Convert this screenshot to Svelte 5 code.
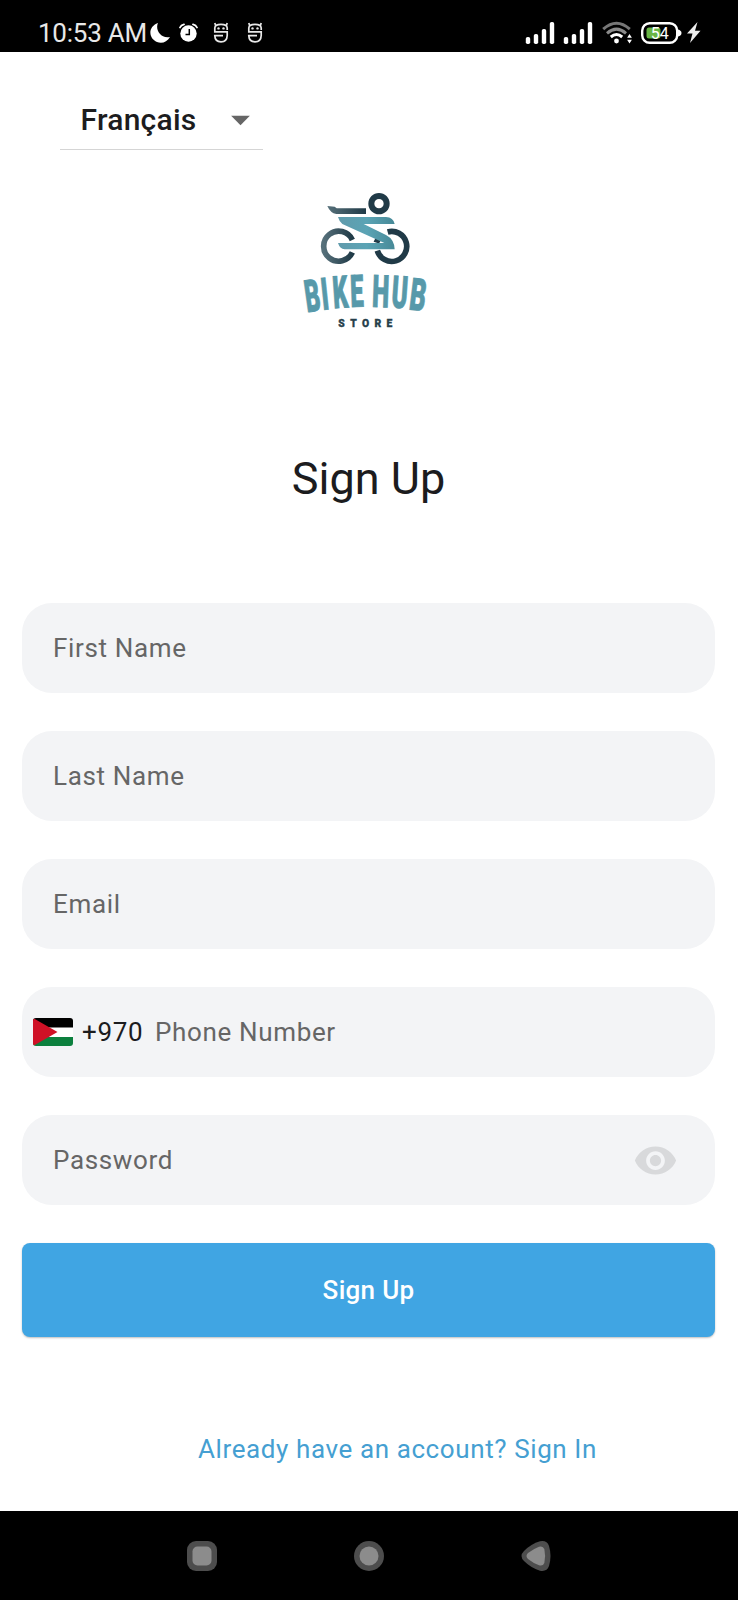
<script>
    let form = { first: '', last: '', email: '', phone: '', password: '' };
    let language = 'Français';
    let showPassword = false;

    const bars = [ 7, 10, 15, 22 ];

    // letters of the arched wordmark: x, baseline, angle, horizontal squeeze
    const wordmark = [
        { c: 'B', x: 81, y: 397, r: -8, s: .52 },
        { c: 'I', x: 128, y: 390, r: -6, s: .54 },
        { c: 'K', x: 161, y: 385, r: -4, s: .53 },
        { c: 'E', x: 212, y: 381, r: -2, s: .53 },
        { c: 'H', x: 275, y: 380, r: 2, s: .54 },
        { c: 'U', x: 332, y: 382, r: 4, s: .54 },
        { c: 'B', x: 385, y: 388, r: 7, s: .56 }
    ];
</script>

<div class="screen">
    <div class="status">
        <span class="time">10:53 AM</span>
        <svg class="moon" width="20" height="20" viewBox="0 0 20 20">
            <path d="M8 0C5 6 10 16 20 14C17 19 12 21 7 19C-1 16-3 4 8 0Z" fill="#fff" />
        </svg>
        <svg class="alarm" width="19" height="19" viewBox="0 0 19 19">
            <circle cx="9.5" cy="10.5" r="8.2" fill="#fff" />
            <path d="M1 4.5Q2 2 5 1.3M18 4.5Q17 2 14 1.3" stroke="#fff" stroke-width="1.8" fill="none" stroke-linecap="round" />
            <path d="M10.3 6v5.4H6.5" stroke="#000" stroke-width="1.5" fill="none" />
        </svg>
        {#each [ 1, 2 ] as n }
            <svg class="figure" width="16" height="21" viewBox="0 0 16 21">
                <g fill="none" stroke="#e8e8e8" stroke-width="1.7">
                    <path d="M14.2 8V6Q14 2.4 8 2.4Q2 2.4 1.8 6V9.8H14.2V13.5Q14 19.8 8 19.8Q2 19.8 1.8 13.6H10" />
                    <path d="M2.8 4L1.8 1M13.2 4L14.2 1" />
                </g>
                <circle cx="5.5" cy="6.4" r="1.2" fill="#e8e8e8" />
                <circle cx="10.5" cy="6.4" r="1.2" fill="#e8e8e8" />
            </svg>
        {/each}

        <div class="status__right">
            {#each [ 1, 2 ] as n }
                <svg class="signal" width="28" height="22" viewBox="0 0 28 22">
                    {#each bars as h, i }
                        <rect x={i * 8 - .2} y={22 - h} width="4.4" height={h} rx="1.8" fill="#fff" />
                    {/each}
                </svg>
            {/each}
            <svg class="wifi" width="31" height="23" viewBox="0 0 31 23">
                <g fill="none" stroke-width="3">
                    <path d="M1.2 8.2Q14.5-3.8 27.8 8.2" stroke="#777" />
                    <path d="M5 12.3Q14.5 4 24 12.3" stroke="#8a8a8a" />
                    <path d="M8.8 16Q14.5 11 20.2 16" stroke="#fff" />
                </g>
                <circle cx="14.5" cy="20" r="2.4" fill="#fff" />
                <path d="M27.5 13l2.4 3.8h-4.8zM27.5 22.6l2.4-3.8h-4.8z" fill="#fff" />
            </svg>
            <svg class="battery" width="41" height="22" viewBox="0 0 41 22">
                <rect x="1.2" y="1.2" width="35" height="19.6" rx="7.5" fill="none" stroke="#fff" stroke-width="2.4" />
                <path d="M37 7.5Q40.5 8.5 40.5 11T37 14.5Z" fill="#fff" />
                <rect x="5.5" y="5.5" width="14" height="11" rx="2.5" fill="#68b545" />
                <text x="18.7" y="16.6" text-anchor="middle">54</text>
            </svg>
            <svg class="bolt" width="14" height="21" viewBox="0 0 14 21">
                <path d="M10.5 0L0 11.5H5.5L3 21L13.5 8.7H8Z" fill="#eee" />
            </svg>
        </div>
    </div>

    <main class="page">
        <button class="language">
            <span>{language}</span>
            <svg width="45" height="45" viewBox="0 0 24 24"><path d="M7 10l5 5 5-5z" fill="#666" /></svg>
        </button>

        <svg class="logo" width="170" height="160" viewBox="0 0 510 480">
            <defs>
                <linearGradient id="dark" x1="0" x2="1">
                    <stop offset="0" stop-color="#56707a" />
                    <stop offset="1" stop-color="#203a47" />
                </linearGradient>
                <linearGradient id="teal" gradientUnits="userSpaceOnUse" x1="170" y1="0" x2="350" y2="0">
                    <stop offset="0" stop-color="#609aab" />
                    <stop offset=".5" stop-color="#5ba4b5" />
                    <stop offset="1" stop-color="#458795" />
                </linearGradient>
            </defs>
            <circle cx="297" cy="71" r="23" fill="none" stroke="#203a47" stroke-width="18" />
            <path d="M142 78L164 80L170 85H258V102H169Q151 99 142 78Z" fill="url(#dark)" />
            <path d="M217 180A45 45 0 1 0 217 217" fill="none" stroke="url(#dark)" stroke-width="17" />
            <path d="M323 156A45 45 0 1 1 292 212M289 188Q292 178 302 170" fill="none" stroke="#203a47" stroke-width="17" />
            <path d="M174 111H318Q340 112 344 132H251L318 165Q343 178 344 208H194Q179 206 174 189H313L187 132Q177 123 174 111Z" fill="url(#teal)" />
            {#each wordmark as l }
                <text class="logo__word" transform="translate({l.x} {l.y}) rotate({l.r}) scale({l.s} 1)">{l.c}</text>
            {/each}
            <text class="logo__store" x="175" y="440" textLength="162">STORE</text>
        </svg>

        <h1>Sign Up</h1>

        <form on:submit|preventDefault>
            <label class="field">
                {#if !form.first }<span class="hint">First Name</span>{/if}
                <input bind:value={form.first} />
            </label>
            <label class="field">
                {#if !form.last }<span class="hint">Last Name</span>{/if}
                <input bind:value={form.last} />
            </label>
            <label class="field">
                {#if !form.email }<span class="hint">Email</span>{/if}
                <input bind:value={form.email} />
            </label>
            <div class="field field--phone">
                <svg class="flag" width="40" height="28" viewBox="0 0 40 28">
                    <path d="M0 0H40V10H0Z" fill="#000" />
                    <path d="M0 9.5H40V19H0Z" fill="#fff" />
                    <path d="M0 19H40V28H0Z" fill="#0c803e" />
                    <path d="M0 0L24.5 14L0 28Z" fill="#cf1126" />
                </svg>
                <span class="code">+970</span>
                <label class="cell">
                    {#if !form.phone }<span class="hint">Phone Number</span>{/if}
                    <input bind:value={form.phone} />
                </label>
            </div>
            <div class="field field--password">
                <label class="cell">
                    {#if !form.password }<span class="hint">Password</span>{/if}
                    <input type={showPassword ? 'text' : 'password'} value={form.password} on:input={ e => form.password = e.target.value } />
                </label>
                <button type="button" class="eye" aria-label="Show password" on:click={ () => showPassword = !showPassword }>
                    <svg width="45" height="45" viewBox="0 0 24 24">
                        <path fill="#d8d9db" d="M12 4.5C7 4.5 2.73 7.61 1 12c1.73 4.39 6 7.5 11 7.5s9.27-3.11 11-7.5c-1.73-4.39-6-7.5-11-7.5zM12 17c-2.76 0-5-2.24-5-5s2.24-5 5-5 5 2.24 5 5-2.24 5-5 5zm0-8c-1.66 0-3 1.34-3 3s1.34 3 3 3 3-1.34 3-3-1.34-3-3-3z" />
                    </svg>
                </button>
            </div>
            <button class="submit">Sign Up</button>
        </form>

        <button class="signin">Already have an account? Sign In</button>
    </main>

    <div class="nav">
        <svg width="30" height="30" viewBox="0 0 30 30">
            <rect width="30" height="30" rx="9" fill="#4d4d4d" />
            <rect x="5.5" y="5.5" width="19" height="19" rx="5" fill="#8c8c8c" />
        </svg>
        <svg width="30" height="30" viewBox="0 0 30 30">
            <circle cx="15" cy="15" r="15" fill="#4d4d4d" />
            <circle cx="15" cy="15" r="9.5" fill="#8c8c8c" />
        </svg>
        <svg width="30" height="30" viewBox="0 0 30 30">
            <path d="M3 10Q10 3 19 .3Q26-1 28 5Q31 15 28 25Q26 31 19 29.7Q10 27 3 20Q-2 15 3 10Z" fill="#4d4d4d" />
            <path d="M7 12Q12 8 18 5.7Q22 4.5 23.3 8Q25 15 23.3 22Q22 25.5 18 24.3Q12 22 7 18Q4 15 7 12Z" fill="#8c8c8c" />
        </svg>
    </div>
</div>

<style>
    :global(body) {
        background: #fff;
    }

    .screen {
        display: flex;
        flex-direction: column;
        width: 738px;
        height: 1600px;
        background: #fff;
        color: #1c1c1e;
        font-family: Roboto, sans-serif;
        font-size: 26px;
    }

    svg {
        display: block;
        flex-shrink: 0;
    }

    button {
        border: 0;
        padding: 0;
        background: none;
        color: inherit;
        font: inherit;
    }

    /* Status bar */
    .status {
        display: flex;
        align-items: center;
        box-sizing: border-box;
        height: 52px;
        padding: 13px 37px 0 38px;
        background: #000;
        color: #e8e8e8;
    }

    .time {
        width: 112px;
        white-space: nowrap;
        letter-spacing: -.25px;
        line-height: 30px;
    }

    .alarm {
        margin-left: 9px;
    }

    .figure {
        margin-left: 15px;
    }

    .figure + .figure {
        margin-left: 18px;
    }

    .status__right {
        display: flex;
        align-items: center;
        margin-left: auto;
    }

    .signal {
        margin-right: 10px;
        overflow: visible;
    }

    .battery {
        margin: 0 5px 0 8px;
    }

    .battery text {
        font-size: 16px;
        fill: #fff;
    }

    /* Page */
    .page {
        display: flex;
        flex-direction: column;
        height: 1459px;
        padding: 0 23px 0 22px;
    }

    .language {
        display: flex;
        align-items: center;
        justify-content: space-between;
        box-sizing: border-box;
        width: 202.5px;
        height: 53px;
        margin: 45px 0 0 38px;
        padding: 0 0 8px 20.5px;
        border-bottom: 1.5px solid #d5d5d5;
        font-size: 30px;
        font-weight: 500;
        letter-spacing: .25px;
    }

    .logo {
        margin: 30px 0 0 258px;
    }

    .logo__word {
        font-size: 134px;
        font-weight: 900;
        fill: #5799aa;
        stroke: #5799aa;
        stroke-width: 3px;
    }

    .logo__store {
        font-size: 31px;
        font-weight: 900;
        fill: #263f4b;
        stroke: #263f4b;
        stroke-width: 1px;
    }

    h1 {
        margin: 112px 0 0;
        font-size: 45px;
        font-weight: 400;
        line-height: 53px;
        text-align: center;
    }

    form {
        display: flex;
        flex-direction: column;
        gap: 38px;
        margin-top: 98px;
    }

    .field {
        display: grid;
        align-items: center;
        box-sizing: border-box;
        height: 90px;
        padding: 0 31px;
        border-radius: 30px;
        background: #f3f4f6;
        letter-spacing: .65px;
    }

    .field--phone {
        grid-template-columns: 40px 62px 1fr;
        column-gap: 10px;
        padding-left: 11px;
    }

    .field--password {
        grid-template-columns: 1fr 45px;
        padding-right: 37.5px;
    }

    .cell {
        display: grid;
        align-items: center;
    }

    .hint,
    input {
        grid-area: 1 / 1;
    }

    .hint {
        color: #666;
    }

    input {
        min-width: 0;
        padding: 0;
        border: 0;
        outline: 0;
        background: none;
        font: inherit;
    }

    .flag {
        border-radius: 3px;
    }

    .code {
        margin-left: -1px;
    }

    .submit {
        height: 94px;
        border-radius: 8px;
        background: #40a5e3;
        box-shadow: 0 1px 2px rgba(0, 0, 0, .25);
        color: #fff;
        font-weight: 500;
        letter-spacing: .3px;
    }

    .signin {
        align-self: center;
        margin: 96px 0 0 58px;
        color: #459fd2;
        letter-spacing: .6px;
        line-height: 32px;
    }

    /* Navigation bar */
    .nav {
        display: flex;
        align-items: center;
        justify-content: center;
        gap: 137px;
        height: 89px;
        background: #000;
    }
</style>
